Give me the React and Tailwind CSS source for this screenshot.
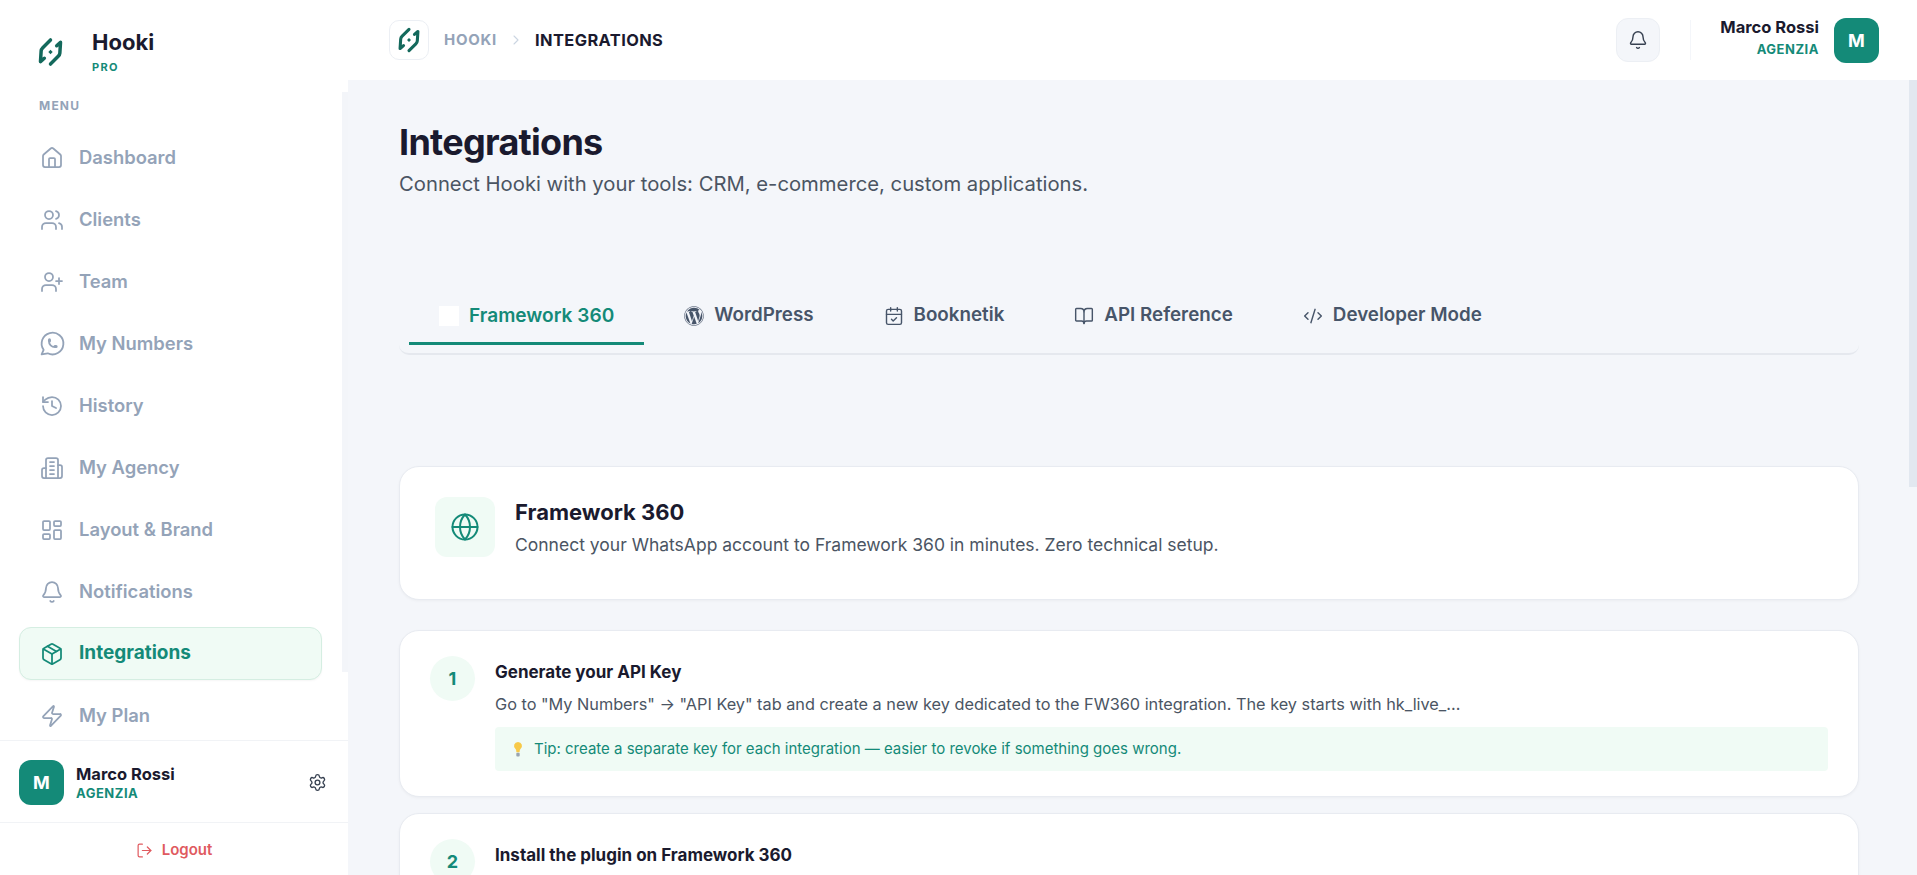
import React from 'react';
import {
  House, Users, UserPlus, History, LayoutDashboard, Bell, Package, Zap,
  Settings, LogOut, Globe, CalendarCheck, BookOpen, CodeXml, ChevronRight,
} from 'lucide-react';
import { TbBrandWhatsapp } from 'react-icons/tb';
import { FaWordpress } from 'react-icons/fa';

const AgencyIcon = ({ size, strokeWidth }) => (
  <svg width={size} height={size} viewBox="0 0 24 24" fill="none" stroke="currentColor" strokeWidth={strokeWidth} strokeLinecap="round" strokeLinejoin="round">
    <path d="M6 22V4a2 2 0 0 1 2-2h8a2 2 0 0 1 2 2v18Z" />
    <path d="M6 12H4a2 2 0 0 0-2 2v6a2 2 0 0 0 2 2h2" />
    <path d="M18 9h2a2 2 0 0 1 2 2v9a2 2 0 0 1-2 2h-2" />
    <path d="M10 6h4" />
    <path d="M10 10h4" />
    <path d="M10 14h4" />
    <path d="M10 18h4" />
  </svg>
);

const navItems = [
  { label: 'Dashboard', icon: House, size: 24 },
  { label: 'Clients', icon: Users, size: 24 },
  { label: 'Team', icon: UserPlus, size: 24 },
  { label: 'My Numbers', icon: TbBrandWhatsapp, size: 29 },
  { label: 'History', icon: History, size: 24 },
  { label: 'My Agency', icon: AgencyIcon, size: 24 },
  { label: 'Layout & Brand', icon: LayoutDashboard, size: 24 },
  { label: 'Notifications', icon: Bell, size: 24 },
  { label: 'Integrations', icon: Package, size: 24, active: true },
  { label: 'My Plan', icon: Zap, size: 24 },
];

const tabs = [
  { label: 'Framework 360', active: true },
  { label: 'WordPress', icon: FaWordpress },
  { label: 'Booknetik', icon: CalendarCheck },
  { label: 'API Reference', icon: BookOpen },
  { label: 'Developer Mode', icon: CodeXml },
];

const HookiLogo = ({ className }) => (
  <svg viewBox="0 0 28 30" className={className} fill="none" stroke="#14695c" strokeWidth="3.6" strokeLinecap="round" strokeLinejoin="round">
    <path d="M14 2.5 6 10.5c-1 1-1.6 2-1.7 3.4L3.6 25l4-3.5" />
    <path d="M14 27.5l8-8c1-1 1.6-2 1.7-3.4L24.4 5l-4 3.5" />
    <rect x="12.4" y="13.4" width="3.2" height="3.2" fill="#14695c" stroke="none" transform="rotate(45 14 15)" />
  </svg>
);

const Avatar = () => (
  <div className="flex h-[45px] w-[45px] shrink-0 items-center justify-center rounded-[12px] bg-[#148a78] text-[18px] font-bold text-white">
    M
  </div>
);

const Step = ({ number, title, children }) => (
  <div className="flex gap-5 rounded-[20px] border border-[#e8ebf1] bg-white px-[30px] pb-[25px] pt-[25px] shadow-[0_1px_3px_rgba(0,0,0,0.04)]">
    <div className="flex h-[45px] w-[45px] shrink-0 items-center justify-center rounded-full bg-[#f0fbf5] text-[18px] font-bold text-[#148a78]">
      {number}
    </div>
    <div className="min-w-0 flex-1 pt-1">
      <h3 className="text-[17px] font-bold leading-6 text-[#1a1a2e]">{title}</h3>
      {children}
    </div>
  </div>
);

export default function App() {
  return (
    <div className="flex h-screen overflow-hidden bg-[#f4f6fa] font-[Inter,sans-serif]">
      {/* Sidebar */}
      <aside className="flex w-[348px] shrink-0 flex-col bg-white">
        <div className="flex h-[92px] shrink-0 items-start gap-[28px] pl-[37px] pt-[28px]">
          <HookiLogo className="mt-[9px] h-[30px] w-[27px]" />
          <div>
            <div className="text-[22px] font-bold leading-[28px] text-[#1a1a2e]">Hooki</div>
            <div className="mt-[4px] text-[11px] font-bold leading-[14px] tracking-[0.12em] text-[#148a78]">PRO</div>
          </div>
        </div>

        <div className="flex min-h-0 flex-1">
          <nav className="min-w-0 flex-1 overflow-hidden pl-[19px] pr-[20px]">
            <div className="pl-5 pt-[6px] text-[12px] font-bold leading-4 tracking-[0.1em] text-[#94a3b8]">MENU</div>
            <ul className="mt-[17px] flex flex-col gap-[9px]">
              {navItems.map(({ label, icon: Icon, size, active }) => (
                <li
                  key={label}
                  className={`flex h-[53px] items-center gap-[15px] rounded-[12px] border pl-[20px] ${
                    active
                      ? 'border-[#d5eee2] bg-[#f0fbf5] text-[19px] font-bold text-[#148a78] shadow-[0_1px_2px_rgba(0,0,0,0.04)]'
                      : 'border-transparent text-[18.4px] font-semibold text-[#94a3b8]'
                  }`}
                >
                  <span className="flex w-6 shrink-0 justify-center">
                    <Icon size={size} strokeWidth={size > 24 ? 1.5 : 1.75} className="shrink-0" />
                  </span>
                  {label}
                </li>
              ))}
            </ul>
          </nav>
          {/* nav scrollbar */}
          <div className="w-[6px] shrink-0">
            <div className="h-[580px] bg-[#f3f5f9]" />
          </div>
        </div>

        <div className="flex h-[82px] shrink-0 items-center gap-[12px] border-t border-[#f1f3f6] pl-[19px] pr-[21px] pt-[2px]">
          <Avatar />
          <div className="flex-1">
            <div className="text-[16.5px] font-bold leading-5 text-[#1a1a2e]">Marco Rossi</div>
            <div className="text-[13px] font-bold leading-[18px] tracking-[0.04em] text-[#148a78]">AGENZIA</div>
          </div>
          <Settings size={19} strokeWidth={1.7} className="text-[#374151]" />
        </div>

        <div className="flex h-[53px] shrink-0 items-center justify-center gap-[9px] border-t border-[#f1f3f6] pt-[3px] text-[15px] font-semibold text-[#e05a5f]">
          <LogOut size={17} strokeWidth={1.7} />
          Logout
        </div>
      </aside>

      <div className="flex min-w-0 flex-1 flex-col">
        {/* Top bar */}
        <header className="flex h-[80px] shrink-0 items-center bg-white pl-[41px] pr-[38px]">
          <div className="flex h-10 w-10 items-center justify-center rounded-[10px] border border-[#eceff4] bg-white">
            <HookiLogo className="h-[26px] w-[24px]" />
          </div>
          <span className="ml-[15px] text-[15px] font-bold tracking-[0.05em] text-[#94a3b8]">HOOKI</span>
          <ChevronRight size={16} strokeWidth={1.6} className="ml-[11px] text-[#cbd5e1]" />
          <span className="ml-[11px] text-[16.4px] font-bold tracking-[0.025em] text-[#1a1a2e]">INTEGRATIONS</span>

          <div className="ml-auto flex h-[44px] w-[44px] items-center justify-center rounded-[12px] border border-[#eceff4] bg-[#f4f6fa]">
            <Bell size={20} strokeWidth={1.7} className="text-[#374151]" />
          </div>
          <div className="ml-[30px] h-10 w-px bg-[#f4f6fa]" />
          <div className="mb-[5px] ml-[29px] text-right">
            <div className="text-[16.5px] font-bold leading-5 text-[#1a1a2e]">Marco Rossi</div>
            <div className="mt-[3px] text-[13px] font-bold leading-[18px] tracking-[0.04em] text-[#148a78]">AGENZIA</div>
          </div>
          <div className="ml-[15px]">
            <Avatar />
          </div>
        </header>

        <div className="flex min-h-0 flex-1">
          {/* Page */}
          <main className="min-w-0 flex-1 overflow-hidden pl-[51px] pr-[50px] pt-[42px]">
            <h1 className="text-[36px] font-bold leading-10 tracking-[-0.02em] text-[#1a1a2e]">Integrations</h1>
            <p className="mt-2 text-[20.25px] leading-7 text-[#4b5563]">
              Connect Hooki with your tools: CRM, e-commerce, custom applications.
            </p>

            <div className="mt-[91px] flex gap-[10px] rounded-b-[10px] border-b-2 border-[#e5e8ee] pb-[8px] pl-[10px]">
              {tabs.map(({ label, icon: Icon, active }) => (
                <div
                  key={label}
                  className={`flex h-[56px] items-center gap-[10px] border-b-[3px] px-[30px] font-semibold ${
                    active ? 'border-[#148a78] text-[19.1px] text-[#148a78]' : 'border-transparent text-[18.8px] text-[#475569]'
                  }`}
                >
                  {Icon ? <Icon size={20} strokeWidth={1.7} /> : <div className="h-5 w-5 bg-white" />}
                  {label}
                </div>
              ))}
            </div>

            <section className="mt-[111px] flex gap-5 rounded-[20px] border border-[#e8ebf1] bg-white pb-[38px] pl-[35px] pr-[36px] pt-[30px] shadow-[0_1px_3px_rgba(0,0,0,0.04)]">
              <div className="flex h-[60px] w-[60px] shrink-0 items-center justify-center rounded-[12px] bg-[#f0fbf5]">
                <Globe size={30} strokeWidth={1.6} className="text-[#148a78]" />
              </div>
              <div>
                <h2 className="text-[22px] font-bold leading-[31px] text-[#1a1a2e]">Framework 360</h2>
                <p className="text-[17.5px] leading-[33px] text-[#4b5563]">
                  Connect your WhatsApp account to Framework 360 in minutes. Zero technical setup.
                </p>
              </div>
            </section>

            <div className="mt-[30px] flex flex-col gap-[16px]">
              <Step number="1" title="Generate your API Key">
                <p className="mt-2 text-[16.27px] leading-6 text-[#4b5563]">
                  Go to "My Numbers" → "API Key" tab and create a new key dedicated to the FW360 integration. The key starts with hk_live_...
                </p>
                <div className="mt-[11px] flex h-[44px] items-center gap-[11px] rounded-[4px] bg-[#f0fbf5] pl-[18px] text-[15px] text-[#148a78]">
                  <svg viewBox="0 0 10 18" className="h-[17px] w-[10px] shrink-0">
                    <path d="M5 1a4.2 4.2 0 0 0-2.6 7.5c.5.5.8 1.5.9 3.5h3.4c.1-2 .4-3 .9-3.5A4.2 4.2 0 0 0 5 1Z" fill="#f7c948" />
                    <rect x="3.2" y="12.5" width="3.6" height="3.8" rx="1" fill="#9aa5b1" />
                  </svg>
                  Tip: create a separate key for each integration — easier to revoke if something goes wrong.
                </div>
              </Step>
              <Step number="2" title="Install the plugin on Framework 360" />
            </div>
          </main>
          {/* page scrollbar */}
          <div className="w-2 shrink-0">
            <div className="h-[407px] bg-[#e2e8f0]" />
          </div>
        </div>
      </div>
    </div>
  );
}
